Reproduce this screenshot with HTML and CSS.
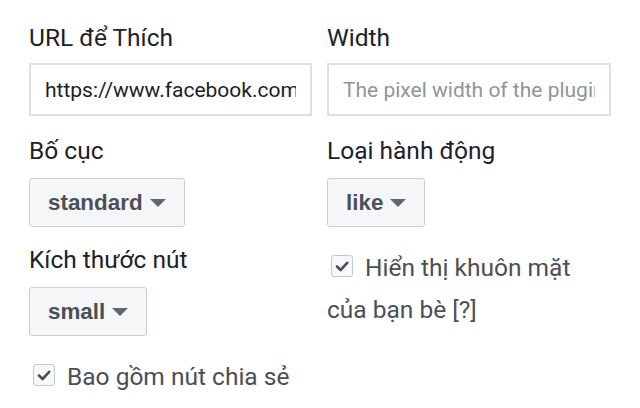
FILE: index.html
```html
<!DOCTYPE html>
<html lang="vi">
<head>
<meta charset="utf-8">
<link rel="stylesheet" href="styles.css">
</head>
<body>
<div class="form">
  <div class="field">
    <div class="label">URL để Thích</div>
    <div class="input"><span class="value">https://www.facebook.com</span></div>
  </div>
  <div class="field">
    <div class="label">Width</div>
    <div class="input"><span class="placeholder">The pixel width of the plugin</span></div>
  </div>
  <div class="field row">
    <div class="label">Bố cục</div>
    <div class="select">standard<span class="caret"></span></div>
  </div>
  <div class="field row">
    <div class="label">Loại hành động</div>
    <div class="select">like<span class="caret"></span></div>
  </div>
  <div class="field row3">
    <div class="label">Kích thước nút</div>
    <div class="select">small<span class="caret"></span></div>
  </div>
  <div class="field row">
    <div class="check-text"><span class="box"><svg viewBox="0 0 22 22" width="22" height="22"><path d="M6 11.5 L9.6 15 L16.2 7.8" fill="none" stroke="#4b4f56" stroke-width="2.6" stroke-linecap="round" stroke-linejoin="round"/></svg></span>Hiển thị khuôn mặt của bạn bè [?]</div>
  </div>
  <div class="field row wide">
    <div class="check-text"><span class="box"><svg viewBox="0 0 22 22" width="22" height="22"><path d="M6 11.5 L9.6 15 L16.2 7.8" fill="none" stroke="#4b4f56" stroke-width="2.6" stroke-linecap="round" stroke-linejoin="round"/></svg></span>Bao gồm nút chia sẻ</div>
  </div>
</div>
</body>
</html>
```

FILE: styles.css
```css
html, body {
  margin: 0;
  padding: 0;
  background: #ffffff;
}
body {
  width: 640px;
  height: 408px;
  overflow: hidden;
  font-family: Roboto, "Noto Sans", sans-serif;
}
.form {
  display: grid;
  grid-template-columns: 283px 284px;
  column-gap: 15px;
  padding: 23px 29px 0 29px;
}
.field {
  display: flex;
  flex-direction: column;
  align-items: flex-start;
}
.row {
  margin-top: 20px;
}
.row3 {
  margin-top: 18px;
}
.label {
  font-size: 24.5px;
  line-height: 30px;
  color: #1d2129;
  margin-bottom: 12px;
  white-space: nowrap;
}
.input {
  box-sizing: border-box;
  width: 100%;
  height: 53px;
  border: 2px solid #dddfe2;
  padding: 0 14px;
  display: flex;
  align-items: center;
  font-size: 21px;
  margin-top: -2px;
}
.value,
.placeholder {
  display: block;
  width: 100%;
  overflow: hidden;
  white-space: nowrap;
}
.value { color: #1d2129; }
.placeholder { color: #90949c; }
.select {
  box-sizing: border-box;
  height: 49px;
  display: flex;
  align-items: center;
  padding: 0 18px;
  background: #f5f6f7;
  border: 1.5px solid #ccd0d5;
  border-radius: 3px;
  font-family: "Liberation Sans", Arial, sans-serif;
  font-weight: bold;
  font-size: 22.4px;
  color: #4b4f56;
}
.caret {
  width: 0;
  height: 0;
  margin-left: 7px;
  border-left: 8px solid transparent;
  border-right: 8px solid transparent;
  border-top: 8px solid #606770;
}
.check-text {
  font-size: 24.5px;
  line-height: 42px;
  color: #4b4f56;
}
.box {
  display: inline-block;
  box-sizing: border-box;
  width: 22px;
  height: 22px;
  border: 1.5px solid #c3c7cd;
  border-radius: 3px;
  background: #f7f8f9;
  vertical-align: -1px;
  margin: 0 12px 0 4px;
  position: relative;
}
.box svg {
  position: absolute;
  left: -1.5px;
  top: -1.5px;
}
.wide {
  grid-column: 1 / 3;
}
```
